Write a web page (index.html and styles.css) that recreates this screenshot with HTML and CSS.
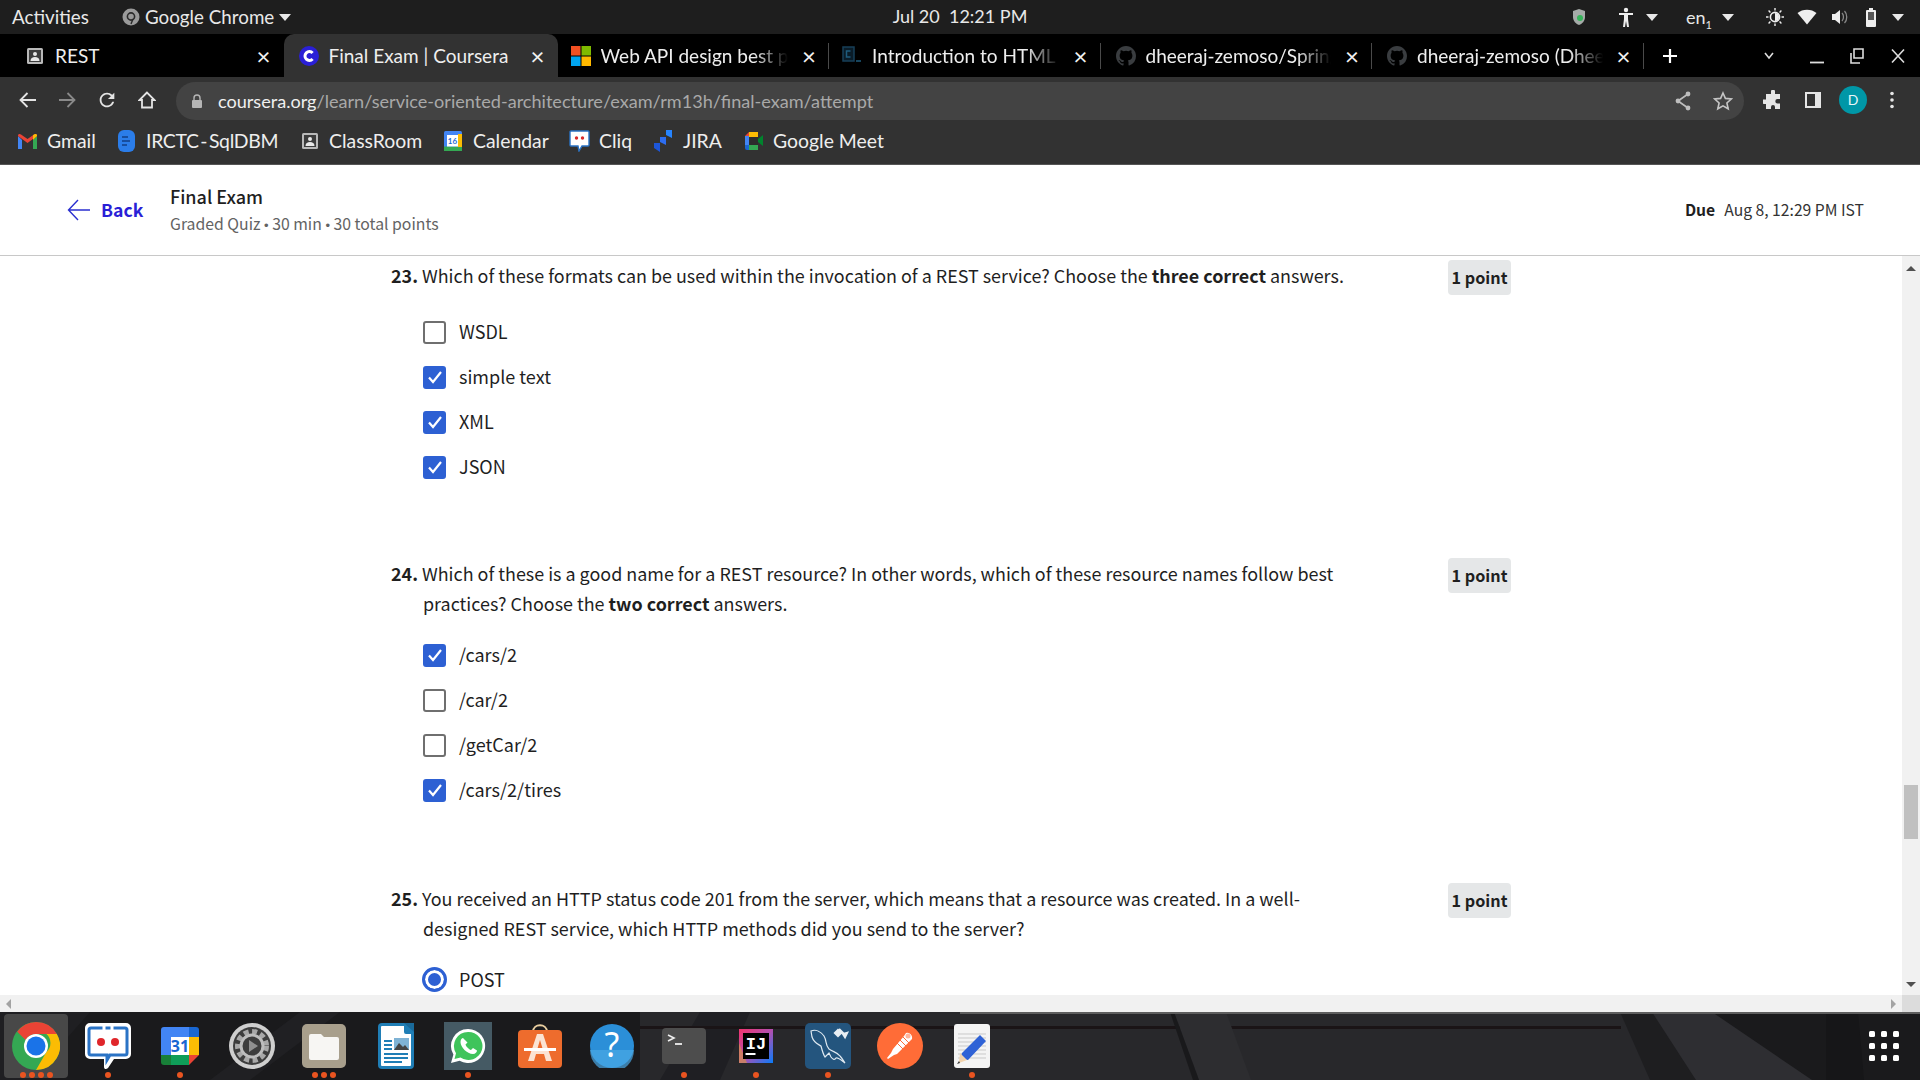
FILE: index.html
```html
<!DOCTYPE html>
<html lang="en">
<head>
<meta charset="utf-8">
<title>Final Exam | Coursera</title>
<link rel="stylesheet" href="styles.css">
</head>
<body>
<div class="topbar">
  <div class="top-left">
    <span class="activities">Activities</span>
    <span class="appname">
      <svg width="18" height="18" viewBox="0 0 18 18"><circle cx="9" cy="9" r="8.500" fill="#9a9a9a"/><circle cx="9" cy="8.500" r="3.600" fill="none" stroke="#2a2a2a" stroke-width="1.600"/><path d="M11 11l-2 5" stroke="#2a2a2a" stroke-width="1.400"/></svg>
      Google Chrome
      <i class="caret"></i>
    </span>
  </div>
  <div class="clock">Jul 20&nbsp;&nbsp;12:21 PM</div>
  <div class="top-right">
    <svg class="tr-shield" width="14" height="18" viewBox="0 0 14 18"><path d="M7 1l6 2v6c0 4-3 7-6 8-3-1-6-4-6-8V3z" fill="#a5aba8"/><circle cx="8" cy="10" r="3" fill="#35b45a"/></svg>
    <svg class="tr-person" width="16" height="20" viewBox="0 0 16 20"><circle cx="8" cy="3" r="2.200" fill="#eee"/><path d="M1 6h14v2H10v4l1 8H9l-1-6-1 6H5l1-8V8H1z" fill="#eee"/></svg>
    <i class="caret tr-c1"></i>
    <span class="lang">en<sub>1</sub></span>
    <i class="caret tr-c2"></i>
    <svg class="tr-sun" width="20" height="20" viewBox="0 0 20 20"><circle cx="10" cy="10" r="4.600" fill="none" stroke="#eee" stroke-width="1.600"/><path d="M10 6a4 4 0 010 8z" fill="#eee"/><path d="M10 1v2.500M10 16.500V19M1 10h2.500M16.500 10H19M3.600 3.600l1.800 1.800M14.600 14.600l1.800 1.800M3.600 16.400l1.800-1.800M14.600 5.400l1.800-1.800" stroke="#eee" stroke-width="1.400"/></svg>
    <svg class="tr-wifi" width="20" height="16" viewBox="0 0 20 16"><path d="M10 15.500L.5 4C5.500-.5 14.500-.5 19.500 4z" fill="#eee"/></svg>
    <svg class="tr-vol" width="18" height="16" viewBox="0 0 18 16"><path d="M1 5h3l5-4v14l-5-4H1z" fill="#eee"/><path d="M11 4c2 2 2 6 0 8M13.500 2c3 3 3 9 0 12" fill="none" stroke="#888" stroke-width="1.300"/></svg>
    <svg class="tr-bat" width="12" height="19" viewBox="0 0 12 19"><path d="M4 0h4v2H4z" fill="#eee"/><rect x="1" y="2" width="10" height="17" rx="1" fill="#eee"/><rect x="3" y="4" width="6" height="8" fill="#555"/></svg>
    <i class="caret"></i>
  </div>
</div>

<div class="tabstrip">
  <div class="tab tab-1">
    <svg class="tab-ico" width="20" height="20" viewBox="0 0 20 20"><rect x="2" y="2" width="16" height="16" rx="1.500" fill="#b9b9b9"/><rect x="4" y="4" width="12" height="12" fill="#3c3c3c"/><circle cx="10" cy="8" r="2" fill="#e8e8e8"/><path d="M5.500 15c0-3 2-4 4.500-4s4.500 1 4.500 4z" fill="#e8e8e8"/></svg>
    <span class="tab-title">REST</span><span class="tab-x">×</span>
  </div>
  <div class="tab tab-active">
    <svg class="tab-ico" width="20" height="20" viewBox="0 0 20 20"><circle cx="10" cy="10" r="10" fill="#2a1fd6"/><path d="M13.600 7a4.400 4.400 0 100 6" fill="none" stroke="#fff" stroke-width="3"/></svg>
    <span class="tab-title">Final Exam | Coursera</span><span class="tab-x">×</span>
  </div>
  <div class="tab tab-sep">
    <svg class="tab-ico" width="20" height="20" viewBox="0 0 20 20"><rect width="9.500" height="9.500" fill="#f25022"/><rect x="10.500" width="9.500" height="9.500" fill="#7fba00"/><rect y="10.500" width="9.500" height="9.500" fill="#00a4ef"/><rect x="10.500" y="10.500" width="9.500" height="9.500" fill="#ffb900"/></svg>
    <span class="tab-title fade">Web API design best practices</span><span class="tab-x">×</span>
  </div>
  <div class="tab tab-sep">
    <svg class="tab-ico" width="20" height="20" viewBox="0 0 20 20"><path d="M1 1h11v14H1z" fill="#0a1c28" stroke="#173f58" stroke-width="1.500"/><path d="M8.500 5H4.500v6h4" fill="none" stroke="#1f5c7e" stroke-width="1.500"/><path d="M14 15h5" stroke="#1f5c7e" stroke-width="1.500"/></svg>
    <span class="tab-title fade">Introduction to HTML - W3Schools</span><span class="tab-x">×</span>
  </div>
  <div class="tab tab-sep tab-gh">
    <svg class="tab-ico" width="20" height="20" viewBox="0 0 16 16"><path fill="#3a3d40" d="M8 0C3.580 0 0 3.580 0 8c0 3.540 2.290 6.530 5.470 7.590.4.070.55-.17.55-.38v-1.340c-2.230.48-2.700-1.070-2.700-1.070-.36-.92-.89-1.170-.89-1.170-.73-.5.050-.49.050-.49.800.060 1.230.830 1.230.830.710 1.220 1.870.870 2.330.660.070-.520.280-.870.510-1.070-1.780-.2-3.640-.890-3.640-3.950 0-.870.310-1.590.820-2.150-.080-.2-.360-1.020.080-2.120 0 0 .670-.210 2.200.820a7.600 7.600 0 014 0c1.530-1.040 2.200-.820 2.200-.820.440 1.100.160 1.920.080 2.120.510.560.820 1.270.820 2.150 0 3.070-1.870 3.750-3.650 3.950.290.250.540.730.540 1.480v2.200c0 .210.150.460.550.380A8.010 8.010 0 0016 8c0-4.420-3.580-8-8-8z"/></svg>
    <span class="tab-title fade">dheeraj-zemoso/Spring-Boot</span><span class="tab-x">×</span>
  </div>
  <div class="tab tab-sep tab-gh">
    <svg class="tab-ico" width="20" height="20" viewBox="0 0 16 16"><path fill="#3a3d40" d="M8 0C3.580 0 0 3.580 0 8c0 3.540 2.290 6.530 5.470 7.590.4.070.55-.17.55-.38v-1.340c-2.230.48-2.700-1.070-2.700-1.070-.36-.92-.89-1.170-.89-1.170-.73-.5.050-.49.050-.49.800.060 1.230.830 1.230.830.710 1.220 1.870.870 2.330.660.070-.520.280-.870.510-1.070-1.780-.2-3.640-.890-3.640-3.950 0-.870.310-1.590.820-2.150-.080-.2-.360-1.020.080-2.120 0 0 .670-.210 2.200.820a7.600 7.600 0 014 0c1.530-1.040 2.200-.820 2.200-.820.440 1.100.160 1.920.080 2.120.510.560.820 1.270.820 2.150 0 3.070-1.870 3.750-3.650 3.950.290.250.540.730.540 1.480v2.200c0 .210.150.460.550.380A8.010 8.010 0 0016 8c0-4.420-3.580-8-8-8z"/></svg>
    <span class="tab-title fade">dheeraj-zemoso (Dheeraj Kumar)</span><span class="tab-x">×</span>
  </div>
  <svg class="newtab" width="16" height="16" viewBox="0 0 16 16"><path d="M8 1v14M1 8h14" stroke="#fff" stroke-width="2.200"/></svg>
  <div class="win-ctrls">
    <svg width="12" height="8" viewBox="0 0 12 8"><path d="M2 1l4 5 4-5" fill="none" stroke="#ddd" stroke-width="1.600"/></svg>
    <svg class="w-min" width="14" height="16" viewBox="0 0 14 16"><path d="M0 14.500h14" stroke="#ddd" stroke-width="1.800"/></svg>
    <svg class="w-res" width="14" height="16" viewBox="0 0 14 16"><path d="M4 1h9v9H4zM1 5v10h9" fill="none" stroke="#ddd" stroke-width="1.600"/></svg>
    <svg class="w-x" width="14" height="16" viewBox="0 0 14 16"><path d="M1 1.500l12 13M13 1.500l-12 13" stroke="#ddd" stroke-width="1.600"/></svg>
  </div>
</div>

<div class="toolbar">
  <div class="nav">
    <svg width="18" height="18" viewBox="0 0 18 18"><path d="M17 9H2M8.500 2L1.500 9l7 7" fill="none" stroke="#e4e4e4" stroke-width="1.800"/></svg>
    <svg width="18" height="18" viewBox="0 0 18 18"><path d="M1 9h15M9.500 2l7 7-7 7" fill="none" stroke="#8a8a8a" stroke-width="1.800"/></svg>
    <svg width="22" height="22" viewBox="0 0 24 24"><path fill="#e4e4e4" d="M17.650 6.350A7.958 7.958 0 0012 4c-4.420 0-7.990 3.580-7.990 8s3.570 8 7.990 8c3.730 0 6.840-2.550 7.730-6h-2.080A5.990 5.990 0 0112 18c-3.310 0-6-2.690-6-6s2.690-6 6-6c1.660 0 3.140.690 4.220 1.780L13 11h7V4l-2.350 2.350z"/></svg>
    <svg width="18" height="18" viewBox="0 0 18 18"><path d="M9 1.500L1.500 9h2.500v7.500h10V9h2.500z" fill="none" stroke="#e4e4e4" stroke-width="1.800"/></svg>
  </div>
  <div class="urlbar">
    <svg class="lock" width="12" height="14" viewBox="0 0 12 14"><path d="M3 6V4a3 3 0 016 0v2" fill="none" stroke="#b5b5b5" stroke-width="1.400"/><rect x="1" y="6" width="10" height="8" rx="1" fill="#b5b5b5"/></svg>
    <span class="url"><b>coursera.org</b>/learn/service-oriented-architecture/exam/rm13h/final-exam/attempt</span>
    <svg class="share" width="18" height="20" viewBox="0 0 18 20"><path d="M14 3L4 10l10 7" fill="none" stroke="#bdbdbd" stroke-width="1.700"/><circle cx="14" cy="3" r="2.400" fill="#bdbdbd"/><circle cx="4" cy="10" r="2.400" fill="#bdbdbd"/><circle cx="14" cy="17" r="2.400" fill="#bdbdbd"/></svg>
    <svg class="star" width="20" height="20" viewBox="0 0 20 20"><path d="M10 2l2.400 5.400 5.900.6-4.400 4 1.300 5.800L10 14.800l-5.200 3 1.300-5.800-4.400-4 5.900-.6z" fill="none" stroke="#c5c5c5" stroke-width="1.600"/></svg>
  </div>
  <div class="tools">
    <svg width="20" height="20" viewBox="0 0 20 20"><path d="M8 1.500a2 2 0 014 0V4h5v5h-2.500a2.200 2.200 0 000 4.400H17V19H12v-2a2 2 0 00-4 0v2H3v-5H1a2.300 2.300 0 010-4.600h2V4h5z" fill="#e6e6e6"/></svg>
    <svg width="18" height="18" viewBox="0 0 18 18"><rect x="1" y="1" width="16" height="16" fill="#e6e6e6"/><rect x="3" y="3" width="8" height="12" fill="#323232"/></svg>
    <span class="avatar">D</span>
    <svg class="kebab" width="4" height="18" viewBox="0 0 4 18"><circle cx="2" cy="2.500" r="1.800" fill="#e6e6e6"/><circle cx="2" cy="9" r="1.800" fill="#e6e6e6"/><circle cx="2" cy="15.500" r="1.800" fill="#e6e6e6"/></svg>
  </div>
</div>

<div class="bookmarks">
  <span class="bm bm-gmail"><svg width="19" height="15" viewBox="0 0 19 15"><path d="M0 2v13h4V6z" fill="#4285f4"/><path d="M15 6v9h4V2z" fill="#34a853"/><path d="M0 2l9.500 7L19 2v-.5C19 0 17.500-.5 16 .5L9.500 5 3 .5C1.500-.5 0 0 0 1.500z" fill="#ea4335"/><path d="M15 6l4-4V1.500C19 0 17.500-.5 16 .5L15 1.200z" fill="#fbbc04"/></svg>Gmail</span>
  <span class="bm bm-irctc"><svg width="17" height="22" viewBox="0 0 17 22"><rect width="17" height="22" rx="6" fill="#2b7de9"/><path d="M4 7h6M4 11h8M4 15h5" stroke="#123f86" stroke-width="1.400"/></svg><span class="irctc-label">IRCTC - SqlDBM</span></span>
  <span class="bm bm-class"><svg width="20" height="20" viewBox="0 0 20 20"><rect x="2" y="2" width="16" height="16" rx="1.500" fill="#b9b9b9"/><rect x="4" y="4" width="12" height="12" fill="#3c3c3c"/><circle cx="10" cy="8" r="2" fill="#e8e8e8"/><path d="M5.500 15c0-3 2-4 4.500-4s4.500 1 4.500 4z" fill="#e8e8e8"/></svg>ClassRoom</span>
  <span class="bm bm-cal"><svg width="18" height="20" viewBox="0 0 18 20"><rect width="18" height="20" rx="1.500" fill="#4285f4"/><rect x="0" y="15.500" width="18" height="4.500" fill="#34a853"/><rect x="14" y="3" width="4" height="13" fill="#fbbc04"/><rect x="3" y="4" width="11" height="11.500" fill="#fff"/><text x="8.500" y="13" class="calnum">16</text></svg>Calendar</span>
  <span class="bm bm-cliq"><svg width="21" height="22" viewBox="0 0 21 22"><path d="M2 1h17a1 1 0 011 1v13a1 1 0 01-1 1h-6l-3 5-1-5H2a1 1 0 01-1-1V2a1 1 0 011-1z" fill="#fff" stroke="#2a73c5" stroke-width="1.400"/><circle cx="7.500" cy="8" r="1.700" fill="#d82a2a"/><circle cx="13.500" cy="8" r="1.700" fill="#d82a2a"/></svg>Cliq</span>
  <span class="bm bm-jira"><svg width="20" height="22" viewBox="0 0 20 22"><path d="M13 0h6v8l-6-3z" fill="#2684ff"/><path d="M7 7h6v8l-6-3z" fill="#2d6df0"/><path d="M1 13h6v9l-6-4z" fill="#1d56d8"/></svg>JIRA</span>
  <span class="bm bm-meet"><svg width="20" height="20" viewBox="0 0 20 20"><path d="M5 1h9v5H5z" fill="#fbbc04"/><path d="M5 1L1 5h4z" fill="#ea4335"/><path d="M1 5h4v9H1z" fill="#4285f4"/><path d="M1 14h4v5H3a2 2 0 01-2-2z" fill="#1967d2"/><path d="M5 14h9v5H5z" fill="#34a853"/><path d="M14 1v7l5-4v11l-5-4v7" fill="#00832d"/><rect x="5" y="6" width="9" height="8" fill="#2d2d2d"/></svg>Google Meet</span>
</div>

<div class="pagehead">
  <div class="back">
    <svg width="24" height="22" viewBox="0 0 24 22"><path d="M23 11H2M11 1L1.500 11 11 21" fill="none" stroke="#2a2fd0" stroke-width="1.400"/></svg>
    <span>Back</span>
  </div>
  <div class="exam">
    <div class="exam-title">Final Exam</div>
    <div class="exam-sub">Graded Quiz <span class="dot">•</span> 30 min <span class="dot">•</span> 30 total points</div>
  </div>
  <div class="due"><b>Due</b><span>Aug 8, 12:29 PM IST</span></div>
</div>

<div class="viewport">
  <div class="content">
    <section class="q q-23">
      <div class="q-body">
        <p class="q-text"><b>23.</b> Which of these formats can be used within the invocation of a REST service? Choose the <b>three correct</b> answers.</p>
        <ul class="opts">
          <li><i class="box"></i>WSDL</li>
          <li><i class="box on"><svg width="16" height="14" viewBox="0 0 16 14"><path d="M2 7.500l4 4.500 8-10" fill="none" stroke="#fff" stroke-width="2.200"/></svg></i>simple text</li>
          <li><i class="box on"><svg width="16" height="14" viewBox="0 0 16 14"><path d="M2 7.500l4 4.500 8-10" fill="none" stroke="#fff" stroke-width="2.200"/></svg></i>XML</li>
          <li><i class="box on"><svg width="16" height="14" viewBox="0 0 16 14"><path d="M2 7.500l4 4.500 8-10" fill="none" stroke="#fff" stroke-width="2.200"/></svg></i>JSON</li>
        </ul>
      </div>
      <span class="badge">1 point</span>
    </section>
    <section class="q q-24">
      <div class="q-body">
        <p class="q-text"><b>24.</b> Which of these is a good name for a REST resource? In other words, which of these resource names follow best<br><span class="ind">practices? Choose the <b>two correct</b> answers.</span></p>
        <ul class="opts">
          <li><i class="box on"><svg width="16" height="14" viewBox="0 0 16 14"><path d="M2 7.500l4 4.500 8-10" fill="none" stroke="#fff" stroke-width="2.200"/></svg></i>/cars/2</li>
          <li><i class="box"></i>/car/2</li>
          <li><i class="box"></i>/getCar/2</li>
          <li><i class="box on"><svg width="16" height="14" viewBox="0 0 16 14"><path d="M2 7.500l4 4.500 8-10" fill="none" stroke="#fff" stroke-width="2.200"/></svg></i>/cars/2/tires</li>
        </ul>
      </div>
      <span class="badge">1 point</span>
    </section>
    <section class="q q-25">
      <div class="q-body">
        <p class="q-text"><b>25.</b> You received an HTTP status code 201 from the server, which means that a resource was created. In a well-<br><span class="ind">designed REST service, which HTTP methods did you send to the server?</span></p>
        <ul class="opts">
          <li><i class="radio"></i>POST</li>
        </ul>
      </div>
      <span class="badge">1 point</span>
    </section>
  </div>
  <div class="vscroll">
    <i class="arr-up"></i>
    <i class="thumb"></i>
    <i class="arr-down"></i>
  </div>
</div>
<div class="hscroll"><i class="arr-left"></i><i class="arr-right"></i><i class="corner"></i></div>

<div class="dock">
  <svg class="wood" width="1920" height="68" viewBox="0 0 1920 68">
    <rect width="1920" height="68" fill="#1a1a1c"/>
    <path d="M640 0H1652L1700 68H640z" fill="#28282b"/>
    <path d="M1620 0h32l48 68h-50z" fill="#1e1e20"/>
    <path d="M1652 0h60l100 68h-116z" fill="#2e2e32"/>
    <path d="M0 0h90l-60 68H0z" fill="#1f1f22"/>
    <path d="M300 0h40l-90 68h-40z" fill="#202023"/>
    <path d="M700 0h50l-30 68h-60z" fill="#1f1f23"/>
    <path d="M640 14H1621V17H640z" fill="#1a1416"/>
    <path d="M1174 0h52l25 68h-52z" fill="#2d2d30"/>
    <path d="M1170 0h4l25 68h-6z" fill="#19191b"/>
    <path d="M1826 0h32l6 68h-38z" fill="#161618"/>
    <path d="M960 0h960v2H960z" fill="#5e5e5e"/>
  </svg>
  <div class="dock-item active">
    <svg width="48" height="48" viewBox="0 0 48 48"><circle cx="24" cy="24" r="24" fill="#34a853"/><path d="M24 0a24 24 0 0120.800 12H24a12 12 0 00-10.400 6L5.200 9.800A24 24 0 0124 0z" fill="#ea4335"/><path d="M44.800 12A24 24 0 0124 48l10.400-18a12 12 0 000-18z" fill="#fbbc04"/><circle cx="24" cy="24" r="12" fill="#fff"/><circle cx="24" cy="24" r="9.500" fill="#1a73e8"/></svg>
    <div class="dots"><i></i><i></i><i></i><i></i></div>
  </div>
  <div class="dock-item">
    <svg width="48" height="48" viewBox="0 0 48 48"><path d="M6 1h36a5 5 0 015 5v26a5 5 0 01-5 5H30l-6 9c-2 2-4 1-4-1v-8H6a5 5 0 01-5-5V6a5 5 0 015-5z" fill="#fff"/><path d="M7 6h34a2 2 0 012 2v23a2 2 0 01-2 2H26l-3 5v-5H7a2 2 0 01-2-2V8a2 2 0 012-2z" fill="none" stroke="#2a73c5" stroke-width="3"/><path d="M20 3v6M28 3v6" stroke="#fff" stroke-width="3"/><circle cx="17" cy="20" r="4" fill="#e0262b"/><circle cx="31" cy="20" r="4" fill="#e0262b"/></svg>
    <div class="dots"><i></i></div>
  </div>
  <div class="dock-item">
    <svg width="38" height="38" viewBox="0 0 38 38"><path d="M3 0h25v10H10v18H0V3a3 3 0 013-3z" fill="#4285f4"/><path d="M28 0h7a3 3 0 013 3v7H28z" fill="#1967d2"/><rect x="28" y="10" width="10" height="18" fill="#fbbc04"/><path d="M0 28h10v10H3a3 3 0 01-3-3z" fill="#188038"/><rect x="10" y="28" width="18" height="10" fill="#0f9d58"/><path d="M28 28h10L28 38z" fill="#ea4335"/><rect x="10" y="10" width="18" height="18" fill="#fff"/><text x="19" y="25" class="dock-cal">31</text></svg>
    <div class="dots"><i></i></div>
  </div>
  <div class="dock-item">
    <svg width="46" height="46" viewBox="0 0 46 46"><circle cx="23" cy="23" r="23" fill="#cfcfcf"/><circle cx="23" cy="23" r="19" fill="#3d3d3d"/><circle cx="23" cy="23" r="14.500" fill="none" stroke="#a8a8a8" stroke-width="5" stroke-dasharray="5 3.500"/><circle cx="23" cy="23" r="11" fill="none" stroke="#bdbdbd" stroke-width="3"/><path d="M20 17l9 6-9 6z" fill="#8f8f8f"/></svg>
    <div class="dots none"></div>
  </div>
  <div class="dock-item">
    <svg width="44" height="44" viewBox="0 0 44 44"><rect width="44" height="44" rx="5" fill="#a89f8c"/><path d="M7 12a2 2 0 012-2h10l3 3h13a2 2 0 012 2v19a2 2 0 01-2 2H9a2 2 0 01-2-2z" fill="#f7f6f3"/></svg>
    <div class="dots"><i></i><i></i><i></i></div>
  </div>
  <div class="dock-item">
    <svg width="36" height="46" viewBox="0 0 36 46"><path d="M4 0h24l8 8v34a4 4 0 01-4 4H4a4 4 0 01-4-4V4a4 4 0 014-4z" fill="#1f7eb6"/><path d="M4 3h22v6a2 2 0 002 2h5v31a1 1 0 01-1 1H4a1 1 0 01-1-1V4a1 1 0 011-1z" fill="#fff"/><path d="M26 0l10 9V0z" fill="#1a6a9a"/><path d="M6 18h8M6 22h8M6 26h8M6 31h24M6 35h24M6 39h18" stroke="#1f7eb6" stroke-width="2"/><rect x="16" y="15" width="15" height="12" fill="#7fb3d5"/><path d="M16 27l5-7 4 4 2-2 4 5z" fill="#444"/></svg>
    <div class="dots none"></div>
  </div>
  <div class="dock-item">
    <div class="wa-tile"><svg width="36" height="36" viewBox="0 0 36 36"><path d="M18 1a17 17 0 00-14.600 25.600L1 35l8.600-2.300A17 17 0 1018 1z" fill="#fff"/><path d="M18 4a14 14 0 00-12 21.200L4.500 31l6-1.500A14 14 0 1018 4z" fill="#3fc45b"/><path d="M13 10c-1 0-2.500 1.500-2.500 4 0 5 6.500 12 12.500 12 2.500 0 4-2 4-3.500l-4-2.500-2 2c-2-.5-5-3.500-5.500-5.500l2-2z" fill="#fff"/></svg></div>
    <div class="dots"><i></i></div>
  </div>
  <div class="dock-item">
    <svg width="44" height="44" viewBox="0 0 44 44"><path d="M15 8c0-9 14-9 14 0" fill="none" stroke="#e9cfa0" stroke-width="2"/><rect y="6" width="44" height="38" rx="4" fill="#ee6c2d"/><path d="M19 10h6l9 27h-6l-2-7H18l-2 7h-6zM22 16l-3 10h6z" fill="#fbe3d3"/><rect x="6" y="24" width="32" height="3" fill="#fff"/></svg>
    <div class="dots none"></div>
  </div>
  <div class="dock-item">
    <svg width="44" height="44" viewBox="0 0 44 44"><circle cx="22" cy="22" r="22" fill="#2b8fd8"/><path d="M0 26h44a22 22 0 01-44 0z" fill="#4aa8e6" opacity=".7"/><text x="22" y="33" class="help">?</text></svg>
    <div class="dots none"></div>
  </div>
  <div class="dock-item">
    <svg width="44" height="36" viewBox="0 0 44 36"><rect width="44" height="36" rx="4" fill="#4d4d4d"/><path d="M6 7l6 3-6 3" fill="none" stroke="#eee" stroke-width="1.600"/><path d="M13 16h7" stroke="#eee" stroke-width="1.800"/></svg>
    <div class="dots"><i></i></div>
  </div>
  <div class="dock-item">
    <svg width="34" height="34" viewBox="0 0 34 34"><defs><linearGradient id="ij" x1="0" y1="0" x2="1" y2="1"><stop offset="0" stop-color="#f0346e"/><stop offset=".5" stop-color="#b34fb0"/><stop offset="1" stop-color="#087cfa"/></linearGradient></defs><rect width="34" height="34" fill="url(#ij)"/><path d="M0 14v20h8z" fill="#d6924a" opacity=".7"/><rect x="4" y="4" width="26" height="26" fill="#000"/><text x="17" y="20" class="ij">IJ</text><rect x="6.500" y="24" width="10" height="2" fill="#fff"/></svg>
    <div class="dots"><i></i></div>
  </div>
  <div class="dock-item">
    <svg width="46" height="46" viewBox="0 0 46 46"><rect width="46" height="46" rx="5" fill="#24557e"/><path d="M6 8c5-2 10 1 13 5 3 5 1 9 5 13 4 3 8 3 11 7 2 2 3 4 5 7-4-3-7-6-9-5-1 2-3 2-5-1l-2-4c-2 2-3 3-4 4-2-3-3-7-4-11-3-2-7-3-9-9z" fill="none" stroke="#dfe9f1" stroke-width="1.200"/><path d="M34 6l6 6M36 10l-3 3-3-3 3-3zM38 11l4-1-2 4z" stroke="#e8eef3" stroke-width="2.200" fill="#e8eef3"/></svg>
    <div class="dots"><i></i></div>
  </div>
  <div class="dock-item">
    <svg width="46" height="46" viewBox="0 0 46 46"><circle cx="23" cy="23" r="23" fill="#ff6c37"/><path d="M29 10a5 5 0 016 6l-2 2-13 13-3 1-6 4-1-1 4-5 2-4 11-13z" fill="#fff"/><path d="M26 14l6 6M23 17l6 6M20 20l6 6" stroke="#ff6c37" stroke-width="1"/><circle cx="31" cy="13" r="2.500" fill="#ff6c37" opacity=".5"/></svg>
    <div class="dots none"></div>
  </div>
  <div class="dock-item">
    <svg width="36" height="44" viewBox="0 0 36 44"><rect width="36" height="44" rx="3" fill="#f4f4f4"/><path d="M4 10h28M4 14h28M4 18h28M4 22h28M4 26h28M4 30h28M4 34h28" stroke="#c9c9c9"/><path d="M26 11l6 6-18 19-7-1-1 0 2-6z" fill="#2f62d6"/><path d="M6 29l7 7-8 3z" fill="#f2d3ad"/><path d="M5 37l-2 3 3-1z" fill="#333"/></svg>
    <div class="dots"><i></i></div>
  </div>
  <div class="apps-grid"><i></i><i></i><i></i><i></i><i></i><i></i><i></i><i></i><i></i></div>
</div>
</body>
</html>
```

FILE: styles.css
```css
* { box-sizing: border-box; }
html, body { margin: 0; padding: 0; }
body {
  width: 1920px;
  height: 1080px;
  overflow: hidden;
  display: flex;
  flex-direction: column;
  background: #fff;
  font-family: "Noto Sans CJK SC", "Noto Sans", sans-serif;
}
i { display: block; font-style: normal; }

/* system top bar */
.topbar {
  height: 34px;
  flex: none;
  display: grid;
  grid-template-columns: 1fr auto 1fr;
  align-items: center;
  background: #1e1e1e;
  color: #e8e8e8;
  font: 18.800px/32px Lato, "Open Sans", sans-serif;
}
.top-left { display: flex; align-items: center; padding-left: 12px; }
.activities { width: 110px; }
.appname { display: flex; align-items: center; gap: 5px; }
.caret {
  width: 0; height: 0;
  border-left: 6px solid transparent;
  border-right: 6px solid transparent;
  border-top: 7px solid #e8e8e8;
}
.clock { font-size: 18px; padding-bottom: 2px; }
.top-right {
  display: flex;
  align-items: center;
  justify-content: flex-end;
  padding-right: 16px;
}
.tr-person { margin-left: 32px; }
.tr-c1 { margin-left: 12px; }
.lang { margin-left: 28px; width: 28px; font-size: 18px; }
.lang sub { font-size: 11px; line-height: 0; }
.tr-c2 { margin-left: 8px; }
.tr-sun { margin-left: 31px; }
.tr-wifi { margin-left: 12px; }
.tr-vol { margin-left: 14px; }
.tr-bat { margin-left: 16px; }
.top-right > .caret:last-child { margin-left: 15px; }

/* tabs */
.tabstrip {
  height: 43px;
  flex: none;
  display: flex;
  align-items: flex-end;
  background: #000;
  padding-left: 12px;
  color: #eee;
  font: 19px/42px Lato, "Open Sans", sans-serif;
}
.tab {
  width: 271.500px;
  height: 43px;
  display: flex;
  align-items: center;
  padding: 0 13px;
  gap: 10px;
  position: relative;
}
.tab-active {
  width: 274px;
  padding-left: 15px;
  background: #323232;
  border-radius: 10px 10px 0 0;
}
.tab-gh { padding-left: 15px; }
.tab-ico { flex: none; }
.tab-title { flex: 1; white-space: nowrap; overflow: hidden; }
.fade {
  -webkit-mask-image: linear-gradient(90deg, #000 80%, transparent 98%);
  mask-image: linear-gradient(90deg, #000 80%, transparent 98%);
}
.tab-x { flex: none; width: 14px; text-align: center; font-size: 24px; line-height: 24px; color: #f2f2f2; }
.tab-sep::after {
  content: "";
  position: absolute;
  right: 0; top: 9px; bottom: 8px;
  width: 1px;
  background: #4a4a4a;
}
.newtab { align-self: center; margin-left: 18px; flex: none; }
.win-ctrls {
  margin-left: auto;
  align-self: center;
  display: flex;
  align-items: center;
  padding-right: 15px;
}
.w-min { margin-left: 35px; }
.w-res { margin-left: 26px; }
.w-x { margin-left: 27px; }

/* toolbar */
.toolbar {
  height: 43px;
  flex: none;
  display: flex;
  align-items: flex-start;
  background: #323232;
}
.nav {
  width: 176px;
  height: 45px;
  padding-left: 19px;
  display: flex;
  align-items: center;
  gap: 21px;
}
.nav svg:nth-child(3) { margin: 0 -1px 0 -1px; }
.urlbar {
  width: 1568px;
  height: 38px;
  margin-top: 5px;
  padding: 0 11px 0 15px;
  display: flex;
  align-items: center;
  background: #434343;
  border-radius: 19px;
}
.url {
  margin-left: 15px;
  flex: 1;
  color: #a9a9a9;
  font: 18.100px/36px Lato, "Open Sans", sans-serif;
  white-space: nowrap;
}
.url b { font-weight: 400; color: #f0f0f0; }
.star { margin-left: 21px; }
.tools {
  flex: 1;
  height: 43px;
  padding: 2px 0 0 19px;
  display: flex;
  align-items: center;
  gap: 21px;
}
.avatar {
  width: 28px; height: 28px;
  margin: 0 2px 0 -4px;
  border-radius: 50%;
  background: #0097a7;
  color: #e8f8fa;
  font: 14px/28px Lato, sans-serif;
  text-align: center;
}

/* bookmarks */
.bookmarks {
  height: 45px;
  flex: none;
  display: flex;
  align-items: center;
  background: #323232;
  border-bottom: 1px solid #555;
  padding: 0 0 2px 18px;
  color: #eee;
  font: 19.400px/42px Lato, "Open Sans", sans-serif;
}
.bm { display: flex; align-items: center; white-space: nowrap; }
.bm-gmail { width: 100px; gap: 10px; }
.bm-irctc { width: 182px; gap: 11px; }
.irctc-label { word-spacing: -3px; letter-spacing: -.3px; }
.bm-class { width: 144px; gap: 9px; }
.bm-cal { width: 125px; gap: 11px; }
.bm-cliq { width: 84px; gap: 9px; }
.bm-jira { width: 91px; gap: 10px; }
.bm-meet { gap: 9px; }
.calnum { font: 700 8px Lato, sans-serif; fill: #1967d2; text-anchor: middle; }

/* page header */
.pagehead {
  height: 91px;
  flex: none;
  display: flex;
  align-items: center;
  padding: 0 56px 0 67px;
  border-bottom: 1px solid #c8c8c8;
  background: #fff;
}
.back {
  width: 103px;
  display: flex;
  align-items: center;
  gap: 10px;
  color: #2a1fd6;
  font-size: 17.600px;
  font-weight: 700;
  line-height: 24px;
}
.exam { padding-top: 2px; }
.exam-title { font-size: 18px; line-height: 26px; font-weight: 500; color: #1f1f1f; }
.exam-sub { font-size: 15.800px; line-height: 26px; color: #636363; margin-top: 2px; }
.dot { font-family: "Liberation Sans", sans-serif; font-size: 13px; }
.due {
  margin-left: auto;
  display: flex;
  gap: 9px;
  font-size: 15.700px;
  line-height: 24px;
  color: #333;
}
.due b { color: #1f1f1f; }

/* scrollable content */
.viewport {
  flex: 1;
  min-height: 0;
  display: flex;
  overflow: hidden;
}
.content {
  flex: 1;
  min-width: 0;
  overflow: hidden;
  padding: 4px 0 0 391px;
}
.q { display: flex; width: 1120px; }
.q-body { width: 1057px; }
.q-text {
  margin: 0;
  font-size: 17.930px;
  line-height: 30px;
  color: #1f1f1f;
}
.q-text b { font-weight: 700; }
.ind { padding-left: 32px; }
.opts { list-style: none; margin: 0; padding: 0 0 0 32px; }
.opts li {
  height: 45px;
  display: flex;
  align-items: center;
  gap: 13px;
  font-size: 18px;
  color: #1f1f1f;
}
.q-23 .opts { margin-top: 18px; }
.q-23 { margin-bottom: 70px; }
.q-24 .opts { margin-top: 13px; }
.q-24 { margin-bottom: 72px; }
.q-25 .opts { margin-top: 13px; }
.box {
  width: 23px; height: 23px;
  flex: none;
  margin-top: 3px;
  border: 2px solid #6f6f6f;
  border-radius: 3px;
  background: #fff;
  display: flex;
  align-items: center;
  justify-content: center;
}
.box.on { background: #2d60d3; border-color: #2d60d3; }
.radio {
  width: 25px; height: 25px;
  flex: none;
  margin: 2px -1px 0;
  border-radius: 50%;
  border: 3px solid #2d60d3;
  background: #2d60d3;
  box-shadow: inset 0 0 0 3px #fff;
}
.badge {
  flex: none;
  width: 63px;
  height: 35px;
  border-radius: 4px;
  background: #e5e7e8;
  color: #1f1f1f;
  font-size: 16.200px;
  font-weight: 700;
  line-height: 35px;
  text-align: center;
  white-space: nowrap;
}

/* scrollbars */
.vscroll {
  width: 18px;
  flex: none;
  display: flex;
  flex-direction: column;
  align-items: center;
  background: #f1f1f1;
}
.arr-up {
  margin-top: 10px;
  width: 0; height: 0;
  border-left: 5px solid transparent;
  border-right: 5px solid transparent;
  border-bottom: 5px solid #505050;
}
.thumb {
  width: 14px;
  height: 54px;
  margin-top: 514px;
  background: #c0c0c0;
}
.arr-down {
  margin-top: auto;
  margin-bottom: 8px;
  width: 0; height: 0;
  border-left: 5px solid transparent;
  border-right: 5px solid transparent;
  border-top: 5px solid #505050;
}
.hscroll {
  height: 17px;
  flex: none;
  display: flex;
  align-items: center;
  background: #f1f1f1;
}
.arr-left {
  margin-left: 6px;
  width: 0; height: 0;
  border-top: 5px solid transparent;
  border-bottom: 5px solid transparent;
  border-right: 5px solid #a3a3a3;
}
.arr-right {
  margin-left: auto;
  margin-right: 6px;
  width: 0; height: 0;
  border-top: 5px solid transparent;
  border-bottom: 5px solid transparent;
  border-left: 5px solid #a3a3a3;
}
.corner { width: 18px; height: 17px; background: #dcdcdc; }

/* dock */
.dock {
  height: 68px;
  flex: none;
  display: flex;
  position: relative;
  background: #1a1a1c;
}
.wood { position: absolute; left: 0; top: 0; }
.dock-item {
  width: 72px;
  height: 68px;
  flex: none;
  position: relative;
  display: flex;
  align-items: center;
  justify-content: center;
}
.dock-item.active::before {
  content: "";
  position: absolute;
  left: 4px; right: 4px; top: 2px; bottom: 2px;
  border-radius: 4px;
  background: #484848;
}
.dock-item svg { position: relative; }
.wa-tile {
  width: 48px; height: 48px;
  background: #455a64;
  display: flex;
  align-items: center;
  justify-content: center;
}
.dots {
  position: absolute;
  bottom: 2px;
  left: 0; right: 0;
  display: flex;
  justify-content: center;
  gap: 3px;
}
.dots i { width: 6px; height: 6px; border-radius: 50%; background: #e95420; }
.dock-cal { font: 700 16px "Noto Sans", sans-serif; fill: #1967d2; text-anchor: middle; }
.help { font: 400 34px "Noto Sans", sans-serif; fill: #fff; text-anchor: middle; }
.ij { font: 700 17px "Liberation Mono", monospace; fill: #fff; text-anchor: middle; }
.apps-grid {
  position: relative;
  margin-left: auto;
  margin-right: 21px;
  margin-top: 19px;
  width: 30px;
  height: 30px;
  display: grid;
  grid-template-columns: repeat(3, 6px);
  grid-template-rows: repeat(3, 6px);
  justify-content: space-between;
  align-content: space-between;
}
.apps-grid i { background: #fff; border-radius: 1.500px; }
```
